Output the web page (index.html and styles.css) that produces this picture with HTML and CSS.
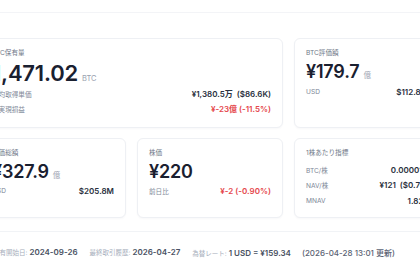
FILE: index.html
```html
<!DOCTYPE html>
<html lang="ja">
<head>
    <meta charset="UTF-8">
    <meta name="viewport" content="width=device-width, initial-scale=1.0">
    <title>BTC保有状況</title>
    <link rel="stylesheet" href="styles.css">
</head>
<body>
    <div class="topbar"></div>

    <div class="summary">
        <div class="cards">
            <!-- holdings -->
            <section class="card card-wide">
                <div class="card-label">BTC保有量</div>
                <div class="big big-lg">1,471.02<span class="unit">BTC</span></div>
                <div class="row">
                    <span class="row-label">平均取得単価</span>
                    <span class="row-value">¥1,380.5万&nbsp; ($86.6K)</span>
                </div>
                <div class="row">
                    <span class="row-label">未実現損益</span>
                    <span class="row-value down">¥-23億 (-11.5%)</span>
                </div>
            </section>

            <section class="card">
                <div class="card-label">BTC評価額</div>
                <div class="big">¥179.7<span class="unit">億</span></div>
                <div class="row">
                    <span class="row-label">USD</span>
                    <span class="row-value">$112.8M</span>
                </div>
            </section>

            <section class="card">
                <div class="card-label">時価総額</div>
                <div class="big">¥327.9<span class="unit">億</span></div>
                <div class="row">
                    <span class="row-label">USD</span>
                    <span class="row-value">$205.8M</span>
                </div>
            </section>

            <section class="card">
                <div class="card-label">株価</div>
                <div class="big">¥220</div>
                <div class="row">
                    <span class="row-label">前日比</span>
                    <span class="row-value down">¥-2 (-0.90%)</span>
                </div>
            </section>

            <section class="card">
                <div class="card-label">1株あたり指標</div>
                <div class="row row-first">
                    <span class="row-label">BTC/株</span>
                    <span class="row-value">0.000010</span>
                </div>
                <div class="row">
                    <span class="row-label">NAV/株</span>
                    <span class="row-value">¥121&nbsp; ($0.76)</span>
                </div>
                <div class="row">
                    <span class="row-label">MNAV</span>
                    <span class="row-value">1.82x</span>
                </div>
            </section>
        </div>
    </div>

    <div class="meta">
        <span class="meta-item"><span class="meta-label">保有開始日:</span> 2024-09-26</span>
        <span class="meta-item"><span class="meta-label">最終取引履歴:</span> 2026-04-27</span>
        <span class="meta-item"><span class="meta-label">為替レート:</span> 1 USD = ¥159.34 <span class="meta-note">(2026-04-28 13:01 更新)</span></span>
    </div>
</body>
</html>
```

FILE: styles.css
```css
body {
    font-family: "Inter", "Noto Sans CJK JP", sans-serif;
    background-color: #fff;
    color: #1d2330;
    margin: 0;
    overflow: hidden;
}

.topbar {
    height: 12px;
    border-bottom: 1px solid #f3f4f7;
}

.summary {
    padding-top: 25px;
}

.cards {
    display: grid;
    grid-template-columns: repeat(3, 146px);
    gap: 10px 11px;
    margin-left: -20px;
}

.card {
    background-color: #fff;
    border: 1px solid #eef0f4;
    border-radius: 6px;
    box-shadow: 0 1px 2px rgba(20, 30, 50, 0.03);
    padding: 7px 11px 8px;
}
.card-wide {
    grid-column: span 2;
    padding-bottom: 10px;
}

.card-label {
    font-size: 6.6px;
    line-height: 14px;
    color: #6f7888;
}

.big {
    font-size: 18px;
    line-height: 24px;
    font-weight: 600;
    color: #1a2030;
    letter-spacing: -0.2px;
}
.big-lg {
    font-size: 22px;
    line-height: 26px;
}
.unit {
    font-size: 7.5px;
    line-height: 1;
    font-weight: 400;
    color: #9aa2b0;
    margin-left: 4px;
    letter-spacing: 0;
}

.row {
    display: flex;
    justify-content: space-between;
    align-items: center;
    height: 15px;
}
.row-first {
    margin-top: 3px;
}
.card .row + .row {
    height: 15.5px;
}
.row-label {
    font-size: 6.6px;
    color: #7e8797;
}
.row-value {
    font-size: 8px;
    font-weight: 600;
    color: #2a3140;
    white-space: pre;
}
.down {
    color: #e5484d;
}

.meta {
    margin-top: 13px;
    border-top: 1px solid #f1f3f6;
    padding: 15px 0 0 0;
    margin-left: -7px;
    display: flex;
    gap: 12px;
    font-size: 8px;
    font-weight: 600;
    color: #4a5263;
    white-space: nowrap;
}
.meta-label {
    font-size: 6.5px;
    font-weight: 400;
    color: #a6aebb;
}
.meta-note {
    margin-left: 9px;
    font-weight: 500;
    color: #5b6374;
}
```
